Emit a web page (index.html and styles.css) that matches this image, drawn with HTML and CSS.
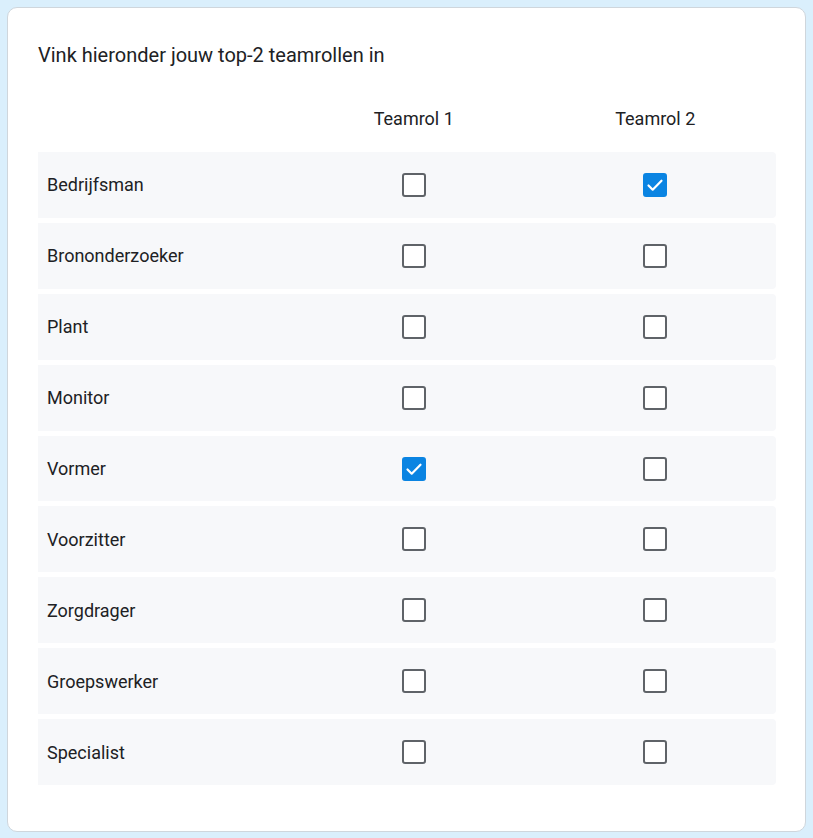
FILE: index.html
```html
<!DOCTYPE html>
<html lang="nl">
<head>
<meta charset="utf-8">
<title>Teamrollen</title>
<link rel="stylesheet" href="styles.css">
</head>
<body>
<div class="card">
  <h1 class="title">Vink hieronder jouw top-2 teamrollen in</h1>
  <table class="matrix">
    <thead>
      <tr>
        <th class="label-col"></th>
        <th>Teamrol 1</th>
        <th>Teamrol 2</th>
      </tr>
    </thead>
    <tbody>
      <tr><td class="label">Bedrijfsman</td><td><span class="cb"></span></td><td><span class="cb checked"><svg viewBox="0 0 24 24"><path d="M5.5 12.5l4.2 4.2 8.8-9"/></svg></span></td></tr>
      <tr><td class="label">Brononderzoeker</td><td><span class="cb"></span></td><td><span class="cb"></span></td></tr>
      <tr><td class="label">Plant</td><td><span class="cb"></span></td><td><span class="cb"></span></td></tr>
      <tr><td class="label">Monitor</td><td><span class="cb"></span></td><td><span class="cb"></span></td></tr>
      <tr><td class="label">Vormer</td><td><span class="cb checked"><svg viewBox="0 0 24 24"><path d="M5.5 12.5l4.2 4.2 8.8-9"/></svg></span></td><td><span class="cb"></span></td></tr>
      <tr><td class="label">Voorzitter</td><td><span class="cb"></span></td><td><span class="cb"></span></td></tr>
      <tr><td class="label">Zorgdrager</td><td><span class="cb"></span></td><td><span class="cb"></span></td></tr>
      <tr><td class="label">Groepswerker</td><td><span class="cb"></span></td><td><span class="cb"></span></td></tr>
      <tr><td class="label">Specialist</td><td><span class="cb"></span></td><td><span class="cb"></span></td></tr>
    </tbody>
  </table>
</div>
</body>
</html>
```

FILE: styles.css
```css
html, body {
  margin: 0;
  padding: 0;
}
body {
  background: #daeffc;
  padding: 7px;
  font-family: Roboto, "Liberation Sans", sans-serif;
  color: #202124;
}
.card {
  background: #ffffff;
  border: 1px solid #cfd6dc;
  border-radius: 10px;
  height: 825px;
  box-sizing: border-box;
  padding: 34px 30px 0 30px;
}
.title {
  margin: 0;
  font-size: 20px;
  font-weight: 400;
  line-height: 26px;
}
.matrix {
  width: 738px;
  border-collapse: separate;
  border-spacing: 0 5px;
  margin-top: 21px;
  table-layout: fixed;
}
.matrix th {
  font-weight: 400;
  font-size: 18px;
  height: 53px;
  text-align: center;
  vertical-align: middle;
  padding: 0 0 5px 0;
  box-sizing: border-box;
}
.matrix th.label-col {
  width: 255px;
}
.matrix td {
  background: #f7f8fa;
  height: 65.9px;
  padding: 0;
  text-align: center;
  vertical-align: middle;
}
.matrix td.label {
  text-align: left;
  padding-left: 9px;
  font-size: 18px;
}
.matrix td:last-child {
  border-radius: 0 4px 4px 0;
}
.cb {
  display: inline-block;
  width: 24px;
  height: 24px;
  box-sizing: border-box;
  border: 2px solid #5f6368;
  border-radius: 3px;
  background: #ffffff;
  vertical-align: middle;
}
.cb.checked {
  background: #0a84e2;
  border-color: #0a84e2;
  position: relative;
}
.cb svg {
  position: absolute;
  left: -2px;
  top: -2px;
  width: 24px;
  height: 24px;
  fill: none;
  stroke: #ffffff;
  stroke-width: 2.2;
  stroke-linecap: round;
  stroke-linejoin: round;
}
```
